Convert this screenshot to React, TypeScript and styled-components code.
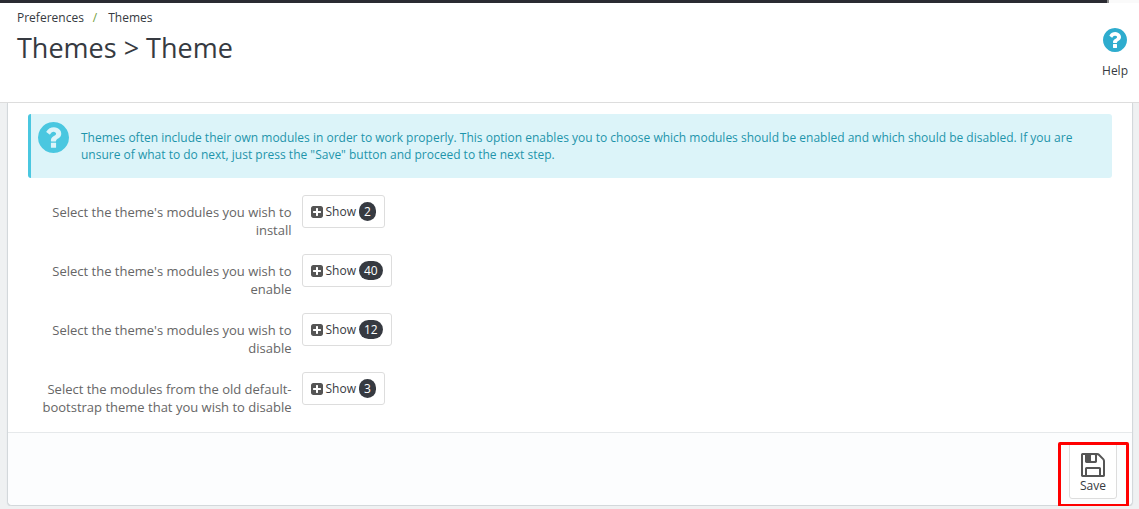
import React from "react";
import styled, { createGlobalStyle } from "styled-components";

const GlobalStyle = createGlobalStyle`
  *, *::before, *::after { box-sizing: border-box; }
  body {
    margin: 0;
    background: #eff1f2;
    color: #363a41;
    font: 12px/17px "Open Sans", "Noto Sans", sans-serif;
  }
  button { font: inherit; color: inherit; cursor: pointer; }
`;

const TopBar = styled.div`
  height: 3px;
  padding-right: 30px;
  background: #fafafa;
  &::before {
    content: "";
    display: block;
    height: 3px;
    background: #2a2b32;
    border-right: 2px solid #8a8a8a;
  }
`;

const Header = styled.header`
  display: flex;
  justify-content: space-between;
  min-height: 100px;
  padding: 6px 11px 0 17px;
  background: #fff;
  border-bottom: 1px solid #ddd;
`;

const Crumbs = styled.ol`
  display: flex;
  margin: 0;
  padding: 0;
  list-style: none;
  li + li::before {
    content: "/";
    padding: 0 11px 0 9px;
    color: #72a03c;
  }
  a { color: inherit; text-decoration: none; }
`;

const Title = styled.h1`
  margin: 3px 0 0;
  font-size: 27px;
  line-height: 38px;
  font-weight: 400;
`;

const HelpLink = styled.a`
  display: flex;
  flex-direction: column;
  align-items: center;
  gap: 10px;
  padding-top: 19px;
  color: inherit;
  text-decoration: none;
  svg { color: #2eacce; }
`;

const Panel = styled.form`
  margin: 0 6px 0 7px;
  background: #fff;
  border: 1px solid #d3d8db;
  border-top: 0;
  border-radius: 0 0 5px 5px;
  box-shadow: 0 1px 1px #d3d8db;
`;

const Content = styled.div`
  padding: 11px 20px 16px;
`;

const Alert = styled.div`
  display: flex;
  gap: 12px;
  min-height: 64px;
  padding: 8px 15px 8px 7px;
  background: #dcf4f9;
  border-left: 3px solid #4ac7e0;
  border-radius: 3px;
  color: #1e94ab;
  svg { flex: none; color: #4ac7e0; }
  p { margin: 0; padding: 7px 15px 0 0; }
`;

const Rows = styled.div`
  display: grid;
  gap: 15px;
  margin: 17px -5px 0;
`;

const Row = styled.div`
  display: grid;
  grid-template-columns: 1fr 3fr;
  align-items: start;
`;

const RowLabel = styled.label`
  padding: 8px 5px 0;
  color: #666;
  font-size: 13px;
  line-height: 18px;
  text-align: right;
`;

const ShowButton = styled.button`
  display: flex;
  align-items: center;
  justify-self: start;
  gap: 3px;
  height: 33px;
  margin-left: 5px;
  padding: 0 8px;
  background: #fff;
  border: 1px solid #ddd;
  border-radius: 3px;
  svg { color: #555; }
`;

const Badge = styled.span`
  padding: 1px 5px;
  border-radius: 10px;
  background: #363a41;
  color: #fff;
`;

const Footer = styled.footer`
  display: flex;
  justify-content: flex-end;
  height: 73px;
  padding: 9px 15px 0;
  background: #fcfdfe;
  border-top: 1px solid #e6e9eb;
  border-radius: 0 0 5px 5px;
`;

const SaveButton = styled.button`
  position: relative;
  display: flex;
  flex-direction: column;
  align-items: center;
  justify-content: flex-end;
  width: 48px;
  height: 57px;
  padding: 0 0 4px;
  background: #fff;
  border: 1px solid #ddd;
  border-radius: 3px;
  svg { color: #555; }
  &::after {
    content: "";
    position: absolute;
    inset: -1px -13px -9px -12px;
    border: 3px solid #f00;
    border-radius: 2px;
    pointer-events: none;
  }
`;

const glyphs = {
  question:
    "M1024 1376v-192q0-14-9-23t-23-9h-192q-14 0-23 9t-9 23v192q0 14 9 23t23 9h192q14 0 23-9t9-23zM1280 704q0-88-55.5-163t-138.5-116-170-41q-243 0-371 213-15 24 8 42l132 100q7 6 19 6 16 0 25-12 53-68 86-92 34-24 86-24 48 0 85.5 26t37.5 59q0 38-20 61t-68 45q-63 28-115.5 86.5t-52.5 125.5v36q0 14 9 23t23 9h192q14 0 23-9t9-23q0-19 21.5-49.5t54.5-49.5q32-18 49-28.5t46-35 44.5-48 28-60.5 12.5-81zM1664 896q0 209-103 385.5t-279.5 279.5-385.5 103-385.5-103-279.5-279.5-103-385.5 103-385.5 279.5-279.5 385.5-103 385.5 103 279.5 279.5 103 385.5z",
  plus:
    "M1408 960v-128q0-26-19-45t-45-19h-320v-320q0-26-19-45t-45-19h-128q-26 0-45 19t-19 45v320h-320q-26 0-45 19t-19 45v128q0 26 19 45t45 19h320v320q0 26 19 45t45 19h128q26 0 45-19t19-45v-320h320q26 0 45-19t19-45zM1664 416v960q0 119-84.5 203.5t-203.5 84.5h-960q-119 0-203.5-84.5t-84.5-203.5v-960q0-119 84.5-203.5t203.5-84.5h960q119 0 203.5 84.5t84.5 203.5z",
  save:
    "M512 1536h768v-384h-768v384zm896 0h128v-896q0-14-10-38.5t-20-34.5l-281-281q-10-10-34-20t-39-10v416q0 40-28 68t-68 28h-576q-40 0-68-28t-28-68v-416h-128v1280h128v-416q0-40 28-68t68-28h832q40 0 68 28t28 68v416zm-384-928v-320q0-13-9.5-22.5t-22.5-9.5h-192q-13 0-22.5 9.5t-9.5 22.5v320q0 13 9.5 22.5t22.5 9.5h192q13 0 22.5-9.5t9.5-22.5zm640 32v928q0 40-28 68t-68 28h-1344q-40 0-68-28t-28-68v-1344q0-40 28-68t68-28h928q40 0 88 20t76 48l280 280q28 28 48 76t20 88z",
};

function Glyph({ name, size }: { name: keyof typeof glyphs; size: number }) {
  return (
    <svg width={size} height={size} viewBox="128 128 1536 1536" fill="currentColor" aria-hidden="true">
      <path d={glyphs[name]} />
    </svg>
  );
}

const groups = [
  { id: "install", label: "Select the theme's modules you wish to install", count: 2 },
  { id: "enable", label: "Select the theme's modules you wish to enable", count: 40 },
  { id: "disable", label: "Select the theme's modules you wish to disable", count: 12 },
  {
    id: "disable-old",
    label: "Select the modules from the old default-bootstrap theme that you wish to disable",
    count: 3,
  },
];

export default function App() {
  return (
    <>
      <GlobalStyle />
      <TopBar />
      <Header>
        <div>
          <nav>
            <Crumbs>
              <li><a href="#preferences">Preferences</a></li>
              <li><a href="#themes">Themes</a></li>
            </Crumbs>
          </nav>
          <Title>Themes &gt; Theme</Title>
        </div>
        <HelpLink href="#help">
          <Glyph name="question" size={24} />
          Help
        </HelpLink>
      </Header>
      <Panel onSubmit={(e) => e.preventDefault()}>
        <Content>
          <Alert>
            <Glyph name="question" size={31} />
            <p>
              Themes often include their own modules in order to work properly. This option enables you to
              choose which modules should be enabled and which should be disabled. If you are unsure of what
              to do next, just press the "Save" button and proceed to the next step.
            </p>
          </Alert>
          <Rows>
            {groups.map((g) => (
              <Row key={g.id}>
                <RowLabel htmlFor={g.id}>{g.label}</RowLabel>
                <ShowButton type="button" id={g.id}>
                  <Glyph name="plus" size={12} />
                  Show
                  <Badge>{g.count}</Badge>
                </ShowButton>
              </Row>
            ))}
          </Rows>
        </Content>
        <Footer>
          <SaveButton type="submit">
            <Glyph name="save" size={24} />
            Save
          </SaveButton>
        </Footer>
      </Panel>
    </>
  );
}
